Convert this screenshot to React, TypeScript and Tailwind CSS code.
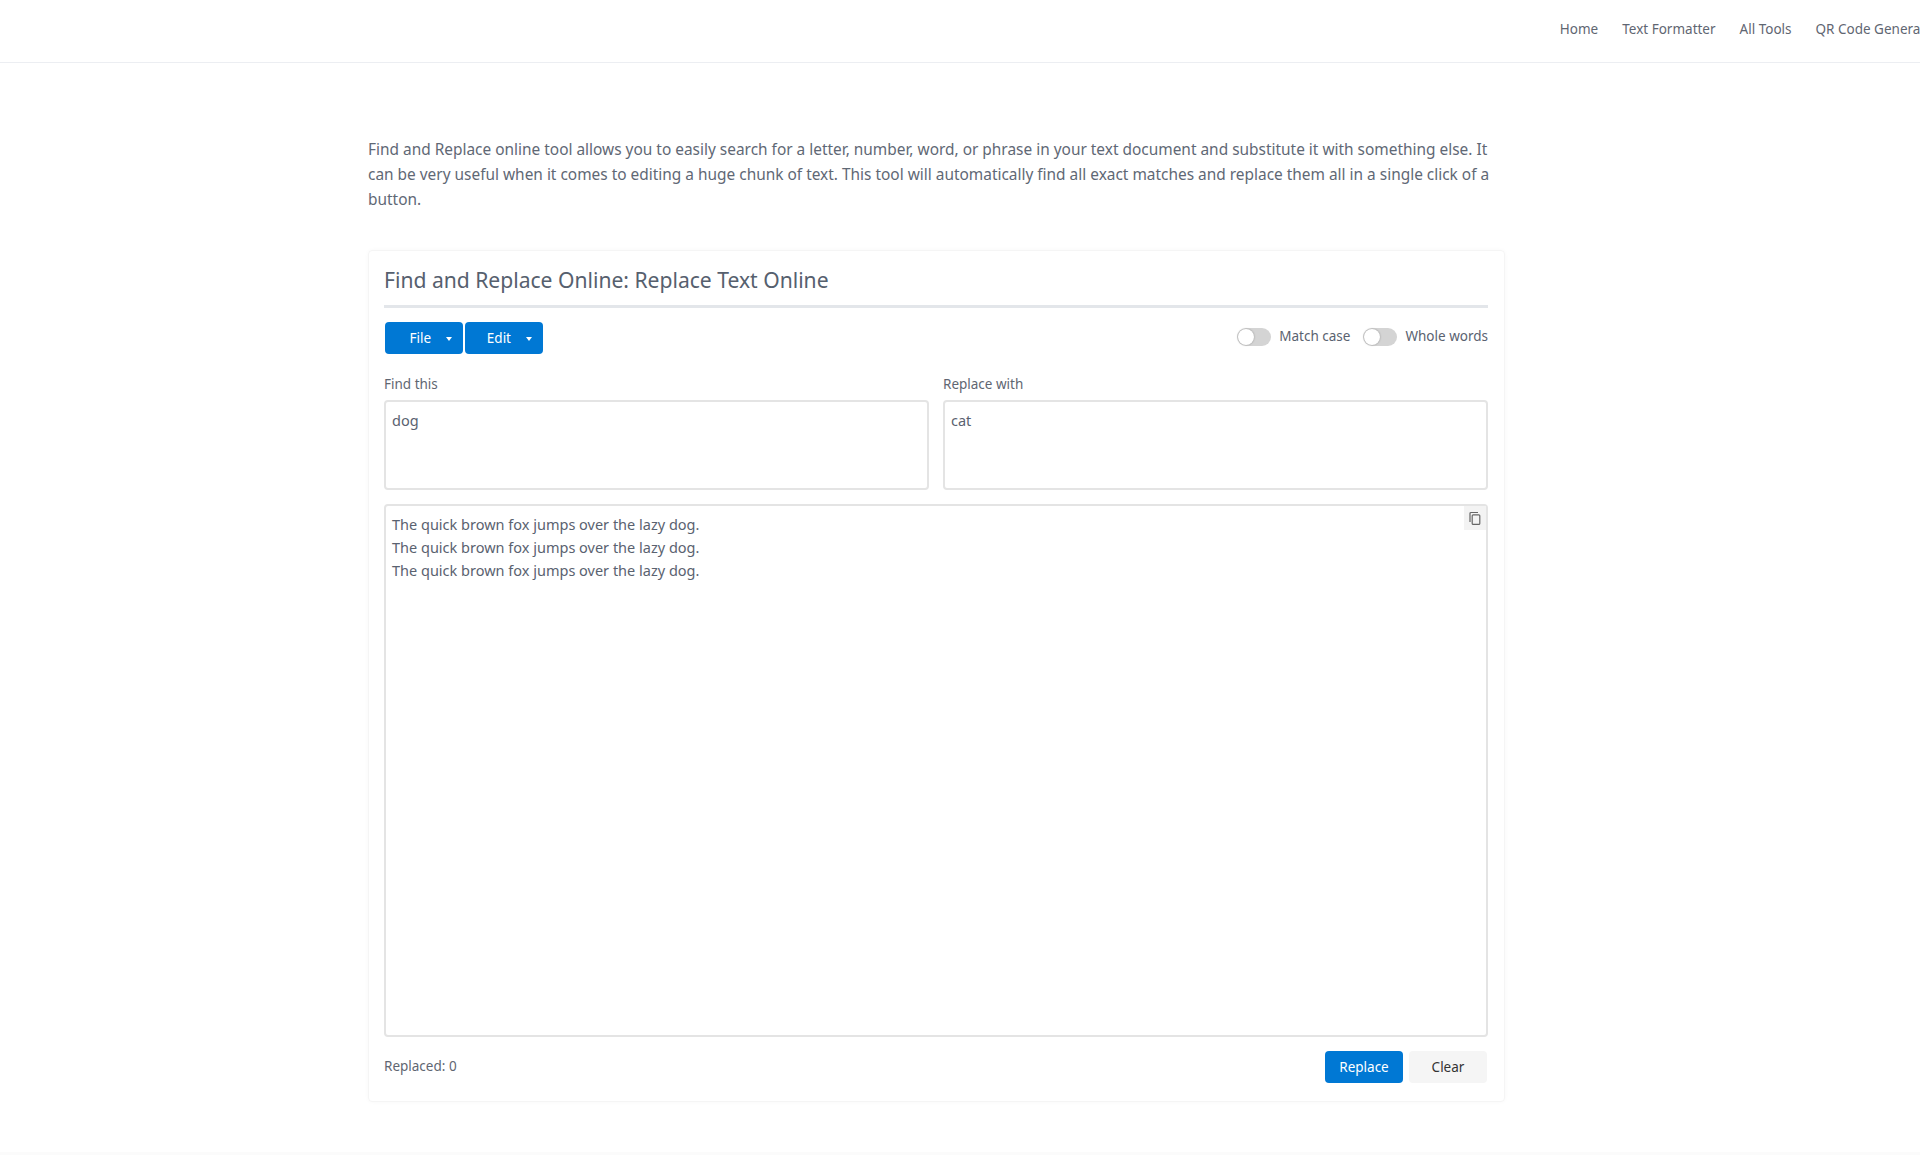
const navLinks = ['Home', 'Text Formatter', 'All Tools', 'QR Code Generator']

function Toggle({ label }: { label: string }) {
  return (
    <div className="flex items-center gap-2">
      <span className="flex h-[18px] w-[34px] items-center rounded-full bg-[#d4d4d4]">
        <span className="h-4 w-4 ml-px rounded-full bg-white shadow-[0_0_2px_rgba(0,0,0,0.35)]" />
      </span>
      <span className="text-[13.5px] text-[#5a6270]">{label}</span>
    </div>
  )
}

function DropButton({ label }: { label: string }) {
  return (
    <button className="flex h-8 w-[78px] items-center justify-end gap-[15px] rounded bg-[#0078d4] pr-[11px] text-[13.5px] text-white">
      {label}
      <span className="mt-px h-0 w-0 border-x-[3.5px] border-t-[4px] border-x-transparent border-t-white" />
    </button>
  )
}

function CopyIcon() {
  return (
    <svg width="14" height="15" viewBox="0 0 14 15" fill="none" stroke="#666" strokeWidth="1.2">
      <path d="M2 11V2.5A1 1 0 0 1 3 1.5h7" />
      <rect x="4.2" y="3.8" width="7.6" height="9.6" rx="1" />
    </svg>
  )
}

export default function App() {
  return (
    <div className="h-[1155px] overflow-hidden bg-white font-['Noto_Sans',sans-serif] text-[#5a6270]">
      {/* Header */}
      <header className="flex h-[63px] items-center justify-end overflow-hidden border-b border-[#eceef2] pb-[3px]">
        <nav className="-mr-[19px] flex shrink-0 gap-[24px] text-[13.5px] text-[#5f6672]">
          {navLinks.map(link => (
            <a key={link} className="whitespace-nowrap">{link}</a>
          ))}
        </nav>
      </header>

      <main className="ml-[368px] w-[1137px] pt-[74px]">
        <p className="mb-[38px] w-[1130px] text-[15.43px] leading-[25px] text-[#5f6875]">
          Find and Replace online tool allows you to easily search for a letter, number, word, or phrase in your text document and substitute it with something else. It can be very useful when it comes to editing a huge chunk of text. This tool will automatically find all exact matches and replace them all in a single click of a button.
        </p>

        {/* Tool card */}
        <section className="rounded border border-[#f5f5f5] pb-[18px] pl-[15px] pr-[16px] pt-[13px] shadow-[0_0_4px_rgba(0,0,0,0.03)]">
          <h1 className="border-b-[3px] border-[#e3e6ea] pb-[9px] text-[21.1px] leading-[32px] text-[#56606e]">
            Find and Replace Online: Replace Text Online
          </h1>

          <div className="mt-[14px] flex items-center justify-between">
            <div className="flex gap-[2px] pl-px">
              <DropButton label="File" />
              <DropButton label="Edit" />
            </div>
            <div className="mb-[3px] flex gap-[13px]">
              <Toggle label="Match case" />
              <Toggle label="Whole words" />
            </div>
          </div>

          <div className="mt-[20px] grid grid-cols-2 gap-[14px]">
            <label className="block text-[13.5px] text-[#5f6672]">
              Find this
              <div className="mt-[6px] h-[90px] rounded border-2 border-[#e4e4e4] px-[6px] py-[8px] text-[14.5px] text-[#5a6270]">dog</div>
            </label>
            <label className="block text-[13.5px] text-[#5f6672]">
              Replace with
              <div className="mt-[6px] h-[90px] rounded border-2 border-[#e4e4e4] px-[6px] py-[8px] text-[14.5px] text-[#5a6270]">cat</div>
            </label>
          </div>

          <div className="relative mt-[14px] h-[533px] rounded border-2 border-[#e4e4e4] px-[6px] py-[7px] text-[14.5px] leading-[23px] text-[#5a6270]">
            <div>The quick brown fox jumps over the lazy dog.</div>
            <div>The quick brown fox jumps over the lazy dog.</div>
            <div>The quick brown fox jumps over the lazy dog.</div>
            <span className="absolute right-0 top-0 flex h-6 w-[22px] items-center justify-center bg-[#f3f3f3]">
              <CopyIcon />
            </span>
          </div>

          <div className="mt-[14px] flex items-center justify-between">
            <span className="mb-[2px] text-[13.5px] text-[#5f6672]">Replaced: 0</span>
            <div className="flex gap-[6px] pr-px">
              <button className="h-8 w-[78px] rounded bg-[#0078d4] text-[13.5px] text-white">Replace</button>
              <button className="h-8 w-[78px] rounded bg-[#f5f5f5] text-[13.5px] text-[#333]">Clear</button>
            </div>
          </div>
        </section>
      </main>

      <footer className="mt-[50px] h-[4px] bg-[#fbfbfb]" />
    </div>
  )
}
